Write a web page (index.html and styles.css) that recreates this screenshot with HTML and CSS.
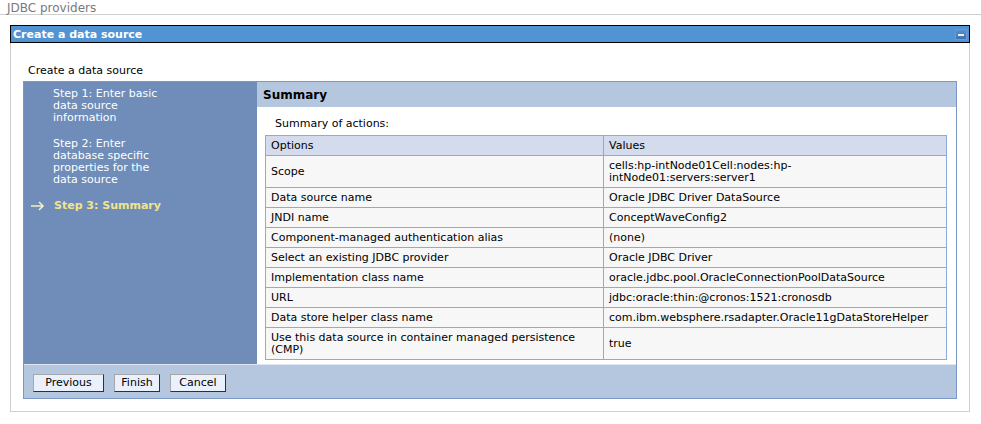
FILE: index.html
```html
<!DOCTYPE html>
<html>
<head>
<meta charset="utf-8">
<link rel="stylesheet" href="styles.css">
</head>
<body>
<div class="crumb">JDBC providers</div>
<div class="panel">
  <div class="titlebar">
    <span class="title">Create a data source</span>
    <span class="minbtn"><span class="minbar"></span></span>
  </div>
  <div class="panel-body">
    <div class="intro">Create a data source</div>
    <div class="wizard">
      <div class="wiz-main">
        <div class="nav">
          <div class="step">Step 1: Enter basic data source information</div>
          <div class="step">Step 2: Enter database specific properties for the data source</div>
          <div class="step current">
            <svg class="arrow" width="14" height="10" viewBox="0 0 14 10"><path d="M0 5H12M8 1L12 5L8 9" fill="none" stroke="#f4eec4" stroke-width="1.6"/></svg>
            <span>Step 3: Summary</span>
          </div>
        </div>
        <div class="content">
          <div class="content-head">Summary</div>
          <div class="content-body">
            <div class="caption">Summary of actions:</div>
            <table class="summary">
              <tr><th class="c1">Options</th><th>Values</th></tr>
              <tr class="tall"><td>Scope</td><td>cells:hp-intNode01Cell:nodes:hp-<br>intNode01:servers:server1</td></tr>
              <tr><td>Data source name</td><td>Oracle JDBC Driver DataSource</td></tr>
              <tr><td>JNDI name</td><td>ConceptWaveConfig2</td></tr>
              <tr><td>Component-managed authentication alias</td><td>(none)</td></tr>
              <tr><td>Select an existing JDBC provider</td><td>Oracle JDBC Driver</td></tr>
              <tr><td>Implementation class name</td><td>oracle.jdbc.pool.OracleConnectionPoolDataSource</td></tr>
              <tr><td>URL</td><td>jdbc:oracle:thin:@cronos:1521:cronosdb</td></tr>
              <tr><td>Data store helper class name</td><td>com.ibm.websphere.rsadapter.Oracle11gDataStoreHelper</td></tr>
              <tr class="tall"><td>Use this data source in container managed persistence<br>(CMP)</td><td>true</td></tr>
            </table>
          </div>
        </div>
      </div>
      <div class="buttons">
        <button class="btn w-prev">Previous</button>
        <button class="btn w-fin">Finish</button>
        <button class="btn w-can">Cancel</button>
      </div>
    </div>
  </div>
</div>
</body>
</html>
```

FILE: styles.css
```css
body {
  margin: 0;
  font-family: "DejaVu Sans", Verdana, sans-serif;
  font-size: 11px;
  color: #000;
  background: #fff;
}
.crumb {
  height: 13px;
  padding-top: 1px;
  line-height: 14px;
  padding-left: 7px;
  font-size: 12px;
  color: #7a7a7a;
  border-bottom: 1px solid #cfcfcf;
}
.panel {
  margin: 10px 0 0 10px;
  width: 960px;
}
.titlebar {
  height: 16px;
  border: 1px solid #000;
  background: #5094d4;
  display: flex;
  align-items: center;
  justify-content: space-between;
  padding: 0 2px 0 2px;
}
.title {
  color: #fff;
  font-weight: bold;
  font-size: 11px;
}
.minbtn {
  width: 12px;
  height: 11px;
  background: linear-gradient(#5a8fc8, #3d72b0);
  border: 1px solid #6b9bd0;
  box-sizing: border-box;
  display: flex;
  align-items: flex-end;
  justify-content: center;
  padding-bottom: 3px;
}
.minbar {
  width: 6px;
  height: 2px;
  background: #e8eef8;
}
.panel-body {
  border: 1px solid #cfcfcf;
  border-top: none;
  padding: 0 12px 12px 12px;
}
.intro {
  padding: 21px 0 0 5px;
  height: 17px;
  line-height: 14px;
}
.wizard {
  border: 1px solid #7b98c4;
  width: 932px;
}
.wiz-main {
  display: flex;
}
.nav {
  width: 233px;
  background: #6f8db8;
  padding: 6px 0 0 0;
  box-sizing: border-box;
  color: #fff;
}
.step {
  width: 118px;
  margin-left: 29px;
  line-height: 12px;
  margin-bottom: 14px;
}
.step.current {
  width: auto;
  margin-left: 6px;
  font-weight: bold;
  color: #f2e48c;
  display: flex;
  align-items: center;
}
.arrow {
  margin-right: 9px;
  margin-left: 1px;
}
.content {
  flex: 1;
  background: #fff;
}
.content-head {
  height: 25px;
  line-height: 27px;
  background: #b5c6df;
  font-weight: bold;
  font-size: 12px;
  padding-left: 6px;
}
.content-body {
  padding: 0 9px 4px 8px;
}
.caption {
  padding: 10px 0 0 10px;
  height: 18px;
  line-height: 14px;
}
table.summary {
  width: 682px;
  border-collapse: collapse;
}
.summary th, .summary td {
  border: 1px solid #8eaadb;
  text-align: left;
  font-weight: normal;
  padding: 0 5px;
  height: 19px;
  line-height: 12px;
  background: #f7f7f7;
  vertical-align: middle;
}
.summary th {
  background: #d3dbec;
}
.summary .c1 {
  width: 327px;
}
.summary tr.tall td {
  height: 31px;
}
.buttons {
  background: #b5c6df;
  border-top: 1px solid #dfe6f1;
  height: 33px;
  display: flex;
  align-items: center;
  gap: 10px;
  padding-left: 9px;
}
.btn {
  font-family: "DejaVu Sans", Verdana, sans-serif;
  font-size: 11px;
  height: 18px;
  padding: 0;
  background: #eaf1fd;
  border: 1px solid;
  border-color: #a8a8a8 #303030 #303030 #a8a8a8;
  color: #000;
  margin-top: 2px;
}
.w-prev { width: 71px; }
.w-fin { width: 46px; }
.w-can { width: 56px; }
```
